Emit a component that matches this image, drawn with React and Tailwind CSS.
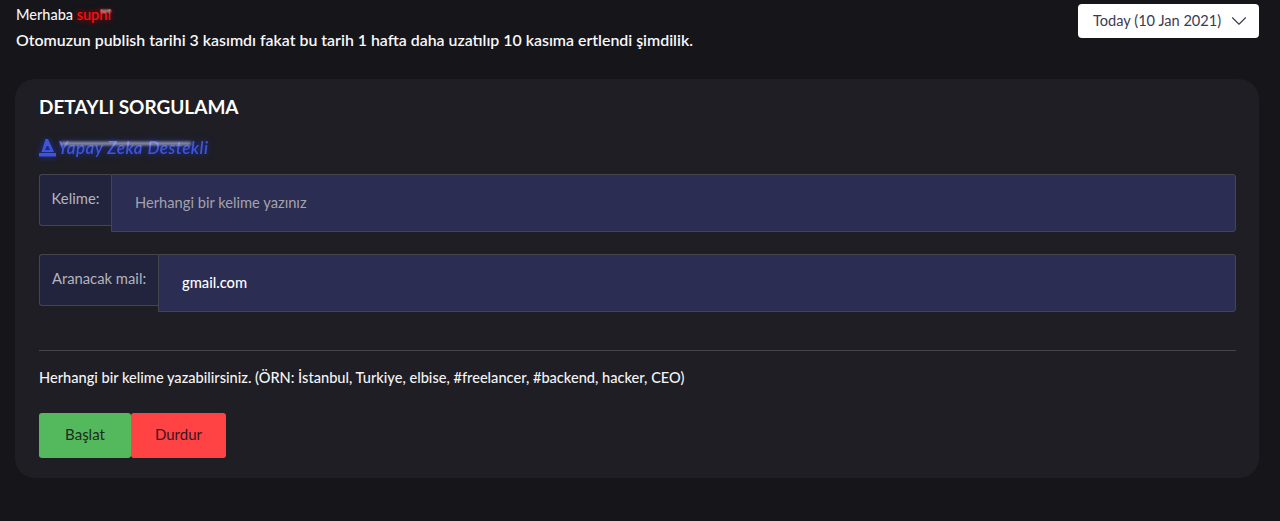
import { ChevronDown } from "lucide-react";

const inputClass =
  "flex-1 min-w-0 h-[58px] bg-[#2b2d52] border border-[#45454f] rounded-r-[3px] pl-[23px] pr-4 pb-[2px] text-[14.7px] font-medium text-white placeholder:text-[#a3a3ad] placeholder:font-normal outline-none";

const labelClass =
  "h-[52px] shrink-0 flex items-center justify-center pb-[3px] bg-[#22233c] border border-[#45454f] border-r-0 rounded-l-[3px] text-[14.8px] text-[#b4b4bc]";

export default function App() {
  return (
    <div
      className="min-h-[521px] bg-[#15151a] pl-[15px] pr-[21px] pt-[5px] text-white overflow-hidden"
      style={{ fontFamily: "Lato, 'Open Sans', sans-serif" }}
    >
      <div className="flex items-start justify-between h-[74px]">
        <div className="pl-px">
          <p className="text-[14.5px] leading-[20px] font-medium text-[#f4f4f6]">
            Merhaba{" "}
            <span className="relative text-[#ff1010] [text-shadow:0_0_6px_#d00000]">
              suphi
              <span className="absolute right-0 top-[4px] w-[10px] h-[2px] bg-white/70 blur-[1px]" />
            </span>
          </p>
          <p className="mt-[5px] text-[15.9px] leading-[20px] font-semibold text-[#f7f7f9]">
            Otomuzun publish tarihi 3 kasımdı fakat bu tarih 1 hafta daha uzatılıp 10 kasıma ertlendi şimdilik.
          </p>
        </div>
        <button className="w-[181px] h-[34px] shrink-0 -mt-px flex items-center justify-between pl-[15px] pr-[7px] bg-white rounded-[4px] text-[14.6px] text-[#3a3b52]">
          Today (10 Jan 2021)
          <ChevronDown size={26} strokeWidth={1} />
        </button>
      </div>

      <div className="h-[399px] bg-[#1e1e24] rounded-[20px] pl-6 pr-[23px] pt-[16px]">
        <h2 className="text-[19px] leading-[24px] font-bold text-white">DETAYLI SORGULAMA</h2>

        <div className="relative mt-[19px] h-[20px] flex items-center gap-[2px] w-fit [filter:drop-shadow(0_0_3px_#1d2fb8)]">
          <svg width="17" height="18" viewBox="0 0 17 18" fill="#3f55d8">
            <path d="M6.5 0h2.5L15 13H2.5zM7.8 7 6 11h5L9.2 7z" fillRule="evenodd" />
            <rect x="0" y="14" width="17" height="3.5" />
          </svg>
          <span className="text-[17px] italic font-semibold text-[#3f55d8] tracking-[0.45px]">Yapay Zeka Destekli</span>
          <span className="absolute left-[22px] top-[4px] w-[130px] h-[3px] bg-white/60 blur-[1.5px]" />
        </div>

        <div className="mt-[16px] flex items-start">
          <label className={`${labelClass} w-[72px]`}>Kelime:</label>
          <input className={inputClass} placeholder="Herhangi bir kelime yazınız" />
        </div>

        <div className="mt-[22px] flex items-start">
          <label className={`${labelClass} w-[119px]`}>Aranacak mail:</label>
          <input className={inputClass} defaultValue="gmail.com" />
        </div>

        <hr className="mt-[38px] border-t border-[#45454c]" />

        <p className="mt-[17px] text-[14.6px] leading-[20px] font-medium text-[#f4f4f6]">
          Herhangi bir kelime yazabilirsiniz. (ÖRN: İstanbul, Turkiye, elbise, #freelancer, #backend, hacker, CEO)
        </p>

        <div className="mt-[25px] flex">
          <button className="w-[92px] h-[45px] pb-[2px] bg-[#54b95c] rounded-[3px] text-[15px] text-[#1d2b20]">Başlat</button>
          <button className="w-[95px] h-[45px] pb-[2px] bg-[#ff4345] rounded-[3px] text-[15px] text-[#3a1420]">Durdur</button>
        </div>
      </div>
    </div>
  );
}
